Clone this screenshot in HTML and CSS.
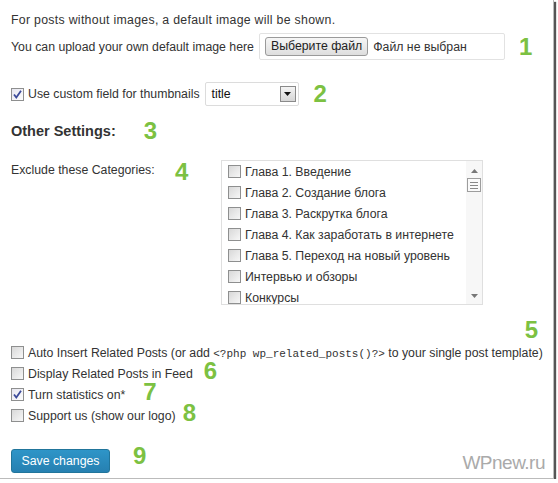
FILE: index.html
```
<!DOCTYPE html>
<html lang="en">
<head>
    <meta charset="UTF-8">
    <meta name="viewport" content="width=device-width, initial-scale=1.0">
    <title>Related Posts Settings</title>
    <link rel="stylesheet" href="styles.css">
</head>
<body>
    <div class="panel">
        <p class="note">For posts without images, a default image will be shown.</p>

        <div class="row upload-row">
            <span class="label">You can upload your own default image here</span>
            <div class="file-box">
                <span class="file-btn">Выберите файл</span>
                <span class="file-name">Файл не выбран</span>
            </div>
            <span class="num num-1">1</span>
        </div>

        <div class="row thumbs-row">
            <span class="cb checked"><svg width="11" height="11" viewBox="0 0 11 11"><path d="M2 5.5 L4.3 8.5 L9 1.8" fill="none" stroke="#3b4a9a" stroke-width="1.8"/></svg></span>
            <span class="label">Use custom field for thumbnails</span>
            <div class="select">
                <span class="select-value">title</span>
                <span class="select-arrow"><svg width="7" height="4" viewBox="0 0 7 4"><path d="M0 0 H7 L3.5 4 Z" fill="#111"/></svg></span>
            </div>
            <span class="num num-2">2</span>
        </div>

        <div class="row heading-row">
            <h3 class="heading">Other Settings:</h3>
            <span class="num num-3">3</span>
        </div>

        <div class="exclude-row">
            <span class="label exclude-label">Exclude these Categories:</span>
            <span class="num num-4">4</span>
            <div class="cat-box">
                <ul class="cat-list">
                    <li><span class="cb"></span>Глава 1. Введение</li>
                    <li><span class="cb"></span>Глава 2. Создание блога</li>
                    <li><span class="cb"></span>Глава 3. Раскрутка блога</li>
                    <li><span class="cb"></span>Глава 4. Как заработать в интернете</li>
                    <li><span class="cb"></span>Глава 5. Переход на новый уровень</li>
                    <li><span class="cb"></span>Интервью и обзоры</li>
                    <li><span class="cb"></span>Конкурсы</li>
                </ul>
                <div class="scrollbar">
                    <svg width="7" height="4" viewBox="0 0 7 4"><path d="M0 4 H7 L3.5 0 Z" fill="#777"/></svg>
                    <span class="thumb"><i></i><i></i><i></i></span>
                    <span class="track"></span>
                    <svg width="7" height="4" viewBox="0 0 7 4"><path d="M0 0 H7 L3.5 4 Z" fill="#777"/></svg>
                </div>
            </div>
        </div>

        <div class="num-line"><span class="num">5</span></div>

        <div class="row opt">
            <span class="cb"></span>
            <span class="label nowrap">Auto Insert Related Posts (or add <code>&lt;?php wp_related_posts()?&gt;</code> to your single post template)</span>
        </div>
        <div class="row opt">
            <span class="cb"></span>
            <span class="label">Display Related Posts in Feed</span>
            <span class="num num-6">6</span>
        </div>
        <div class="row opt">
            <span class="cb checked"><svg width="11" height="11" viewBox="0 0 11 11"><path d="M2 5.5 L4.3 8.5 L9 1.8" fill="none" stroke="#3b4a9a" stroke-width="1.8"/></svg></span>
            <span class="label">Turn statistics on*</span>
            <span class="num num-7">7</span>
        </div>
        <div class="row opt">
            <span class="cb"></span>
            <span class="label">Support us (show our logo)</span>
            <span class="num num-8">8</span>
        </div>

        <div class="row save-row">
            <button class="save-btn">Save changes</button>
            <span class="num num-9">9</span>
        </div>

        <div class="watermark">WPnew.ru</div>
    </div>
</body>
</html>
```

FILE: styles.css
```
body {
    margin: 0;
    background: #fff;
    font-family: "Liberation Sans", Arial, sans-serif;
    font-size: 12.3px;
    color: #333;
}
.panel {
    position: relative;
    width: 542px;
    height: 478px;
    padding-left: 11px;
    box-sizing: content-box;
    background: #fff;
    border-right: 1px solid #bbb;
    border-bottom: 1px solid #bbb;
    box-shadow: 2px 2px 1px #555;
}
.note {
    margin: 0;
    padding-top: 11px;
    line-height: 18px;
    letter-spacing: 0.3px;
}
.row {
    display: flex;
    align-items: center;
}
.nowrap {
    white-space: nowrap;
}
.num {
    color: #7cc142;
    font-weight: bold;
    font-size: 24px;
    line-height: 1;
}

/* upload */
.upload-row {
    margin-top: 4px;
    height: 27px;
}
.file-box {
    display: flex;
    align-items: center;
    width: 244px;
    height: 25px;
    margin-left: 5px;
    border: 1px solid #e2e2e2;
    border-radius: 2px;
}
.file-btn {
    margin-left: 5px;
    height: 17px;
    line-height: 17px;
    padding: 0 5px;
    border: 1px solid #9a9a9a;
    border-radius: 3px;
    background: linear-gradient(#f6f6f6, #dedede);
    color: #222;
}
.file-name {
    margin-left: 5px;
}
.num-1 {
    margin-left: 14px;
}

/* thumbnails */
.thumbs-row {
    margin-top: 22px;
    height: 24px;
}
.cb {
    display: inline-flex;
    align-items: center;
    justify-content: center;
    flex: none;
    width: 11px;
    height: 11px;
    border: 1px solid #8e8f8f;
    background: linear-gradient(135deg, #d8d8d8, #f7f7f7);
    margin-right: 4px;
}
.cb.checked {
    background: linear-gradient(135deg, #e6e6f0, #fdfdfd);
}
.select {
    display: flex;
    align-items: center;
    justify-content: space-between;
    width: 92px;
    height: 22px;
    margin-left: 5px;
    border: 1px solid #dcdcdc;
    border-radius: 2px;
}
.select-value {
    padding-left: 6px;
    color: #111;
}
.select-arrow {
    display: flex;
    align-items: center;
    justify-content: center;
    width: 14px;
    height: 14px;
    margin-right: 2px;
    border: 1px solid #8a8a8a;
    background: linear-gradient(#f4f4f4, #d6d6d6);
}
.num-2 {
    margin-left: 15px;
}

/* heading */
.heading-row {
    margin-top: 15px;
    height: 20px;
}
.heading {
    margin: 0;
    font-size: 14.5px;
    font-weight: bold;
    color: #333;
}
.num-3 {
    margin-left: 28px;
}

/* categories */
.exclude-row {
    display: flex;
    align-items: flex-start;
    margin-top: 19px;
}
.exclude-label {
    width: 164px;
    margin-top: 1px;
    line-height: 18px;
}
.num-4 {
    width: 46px;
}
.cat-box {
    display: flex;
    width: 260px;
    height: 143px;
    border: 1px solid #dfdfdf;
    overflow: hidden;
}
.cat-list {
    flex: 1;
    list-style: none;
    margin: 0;
    padding: 0 0 0 6px;
}
.cat-list li {
    display: flex;
    align-items: center;
    height: 21px;
    white-space: nowrap;
}
.scrollbar {
    display: flex;
    flex-direction: column;
    align-items: center;
    width: 16px;
    padding: 8px 0 6px;
    background: #f7f7f7;
}
.thumb {
    display: flex;
    flex-direction: column;
    justify-content: center;
    gap: 2px;
    width: 8px;
    height: 12px;
    margin-top: 5px;
    padding: 0 2px;
    border: 1px solid #9d9d9d;
    background: #fafafa;
}
.thumb i {
    display: block;
    height: 1px;
    background: #888;
}
.track {
    flex: 1;
}

/* options */
.num-line {
    margin-top: 13px;
    height: 24px;
    padding-right: 15px;
    text-align: right;
}
.opt {
    height: 21px;
}
.opt .num {
    line-height: 17px;
    margin-top: -6px;
}
code {
    font-family: "Liberation Mono", "Courier New", monospace;
    font-size: 11px;
}
.num-6 {
    margin-left: 11px;
}
.num-7 {
    margin-left: 18px;
}
.num-8 {
    margin-left: 7px;
}

/* save */
.save-row {
    margin-top: 23px;
    height: 24px;
}
.save-btn {
    width: 99px;
    height: 24px;
    padding: 0;
    border: 1px solid #21759b;
    border-radius: 3px;
    background: linear-gradient(#2e95c8, #2680b1);
    color: #fff;
    font-family: "Liberation Sans", Arial, sans-serif;
    font-size: 12.3px;
}
.num-9 {
    margin-left: 23px;
    margin-top: -10px;
}
.watermark {
    position: absolute;
    right: 8px;
    bottom: 4px;
    font-size: 19px;
    color: #aaa;
    letter-spacing: -0.5px;
}
```
